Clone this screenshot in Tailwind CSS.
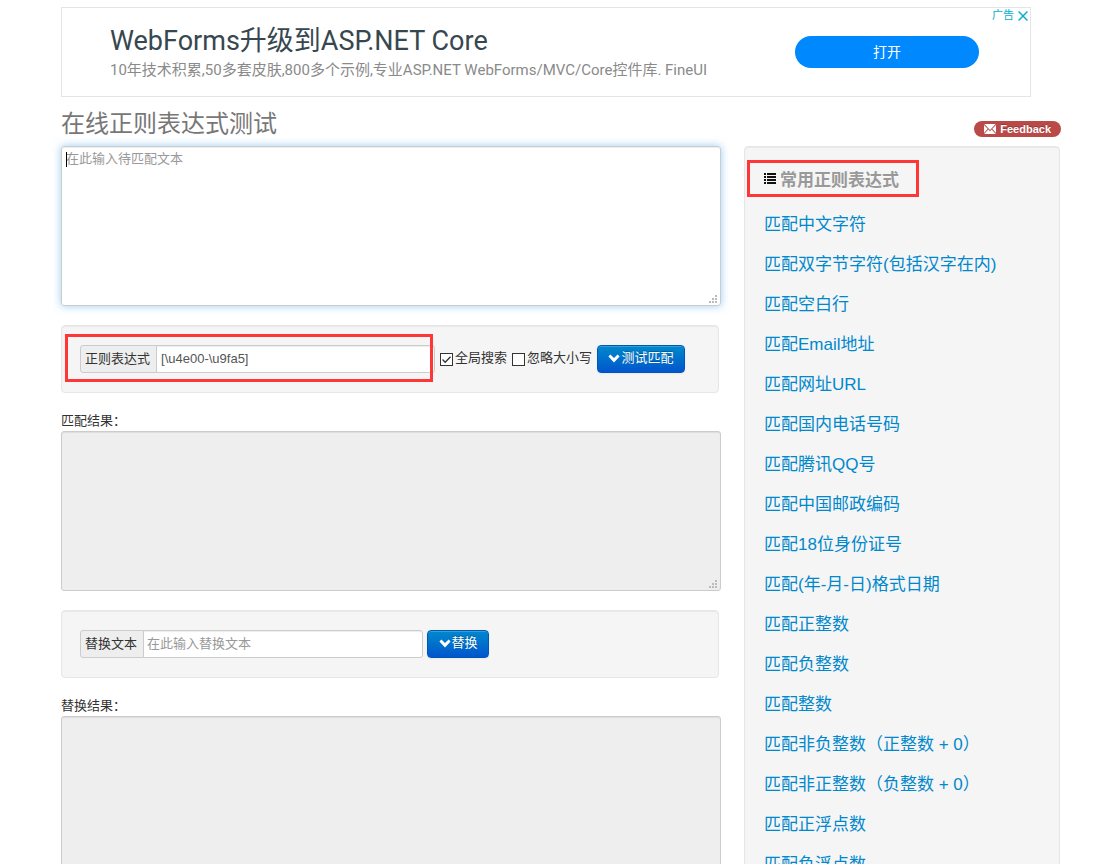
<!DOCTYPE html>
<html lang="zh-CN">
<head>
<meta charset="utf-8">
<title>在线正则表达式测试</title>
<script src="https://cdn.jsdelivr.net/npm/@tailwindcss/browser@4"></script>
</head>
<body class="bg-white font-['Liberation_Sans','Noto_Sans_CJK_SC',sans-serif] text-[13px] leading-[18px] text-[#333]">
<svg class="hidden">
  <symbol id="grip" viewBox="0 0 8 8"><path fill="#bbb" d="M6 0h2v2H6zM3 3h2v2H3zM6 3h2v2H6zM0 6h2v2H0zM3 6h2v2H3zM6 6h2v2H6z"/></symbol>
  <symbol id="chevron" viewBox="0 0 12 9"><path fill="#fff" d="M2.4.6 6 4.1 9.6.6l2 2L6 8.4.4 2.6z"/></symbol>
</svg>
<div class="pt-[7px] pl-[61px] pr-[50px]">

  <aside class="relative mr-[30px] flex min-h-[90px] items-start border border-[#e5e5e5] pl-12 pr-[51px] font-['Roboto','Noto_Sans_CJK_SC',sans-serif]">
    <div class="grow pt-[17px]">
      <h2 class="text-[27px] leading-8 text-[#37474f]">WebForms升级到ASP.NET Core</h2>
      <p class="pt-[3px] text-[15px] leading-5 text-[#8a8a8a]">10年技术积累,50多套皮肤,800多个示例,专业ASP.NET WebForms/MVC/Core控件库. FineUI</p>
    </div>
    <button type="button" class="mt-7 h-8 w-[184px] shrink-0 rounded-full bg-[#0088ff] text-sm text-white">打开</button>
    <a href="#" class="absolute right-[2px] top-0 flex items-center gap-1 text-[11px] leading-4 text-[#00aecd]">广告
      <svg class="size-[10px]" viewBox="0 0 10 10" fill="none" stroke="#00aecd" stroke-width="1.4"><path d="M.6.6l8.8 8.8M9.4.6.6 9.4"/></svg>
    </a>
  </aside>

  <header class="flex h-[49px] items-start justify-between">
    <h1 class="pt-[9px] text-2xl leading-9 text-[#777]">在线正则表达式测试</h1>
    <a href="#" class="mt-6 flex h-4 items-center gap-1 rounded-full bg-[#b94a48] pl-[10px] pr-[10px] text-[11px] leading-[14px] font-bold text-white text-shadow-[0_-1px_0_rgb(0_0_0/0.25)]">
      <svg class="h-[10px] w-3" viewBox="0 0 12 10"><path fill="#fff" d="M.4 0h11.2L6 6zM0 .9l3.7 3.9L0 9zM12 .9 8.3 4.800 12 9zM4.300 5.400 6 7.200l1.700-1.800L11.800 10H.2z"/></svg>Feedback</a>
  </header>

  <div class="flex gap-[23px]">
    <main class="min-w-0 grow">
      <div class="relative">
        <textarea aria-label="待匹配文本" placeholder="在此输入待匹配文本" class="block h-[160px] w-full resize-none rounded-[3px] border border-[#ccc] px-1 py-[3px] text-[#555] placeholder:text-[#999] shadow-[inset_0_1px_1px_rgb(0_0_0/0.075),0_0_8px_rgb(82_168_236/0.6)] outline-none"></textarea>
        <span class="absolute left-[5px] top-[6px] h-[15px] w-px bg-black"></span>
        <svg class="absolute bottom-[3px] right-1 size-2"><use href="#grip"/></svg>
      </div>

      <form class="relative mr-[2px] mt-[19px] flex items-center rounded border border-[#e6e6e6] bg-[#f5f5f5] px-[18px] py-[19px] shadow-[inset_0_1px_1px_rgb(0_0_0/0.05)]">
        <label for="pattern" class="h-7 rounded-l-[3px] border border-[#ccc] bg-[#eee] pl-1 pr-[6px] leading-[25px]">正则表达式</label>
        <input id="pattern" type="text" value="[\u4e00-\u9fa5]" class="-ml-px h-7 min-w-0 grow rounded-r-[3px] border border-[#ccc] bg-white px-1 pb-[2px] text-[#555] shadow-[inset_0_1px_1px_rgb(0_0_0/0.075)]">
        <label class="ml-[5px] flex shrink-0 items-center gap-[2px]">
          <input type="checkbox" checked class="size-[13px] appearance-none border border-[#333] bg-white checked:bg-[url('data:image/svg+xml,%3Csvg%20xmlns=%22http://www.w3.org/2000/svg%22%20viewBox=%220%200%2011%2011%22%3E%3Cpath%20d=%22M1.500%205.500l2.700%202.700%205.300-5.500%22%20fill=%22none%22%20stroke=%22%23333%22%20stroke-width=%221.300%22/%3E%3C/svg%3E')]"><span class="pb-[2px]">全局搜索</span></label>
        <label class="ml-[5px] flex shrink-0 items-center gap-[2px]">
          <input type="checkbox" class="size-[13px] appearance-none border border-[#333] bg-white"><span class="pb-[2px]">忽略大小写</span></label>
        <button type="button" class="ml-[5px] mr-[15px] flex h-7 w-[88px] shrink-0 items-center justify-center gap-px rounded border border-[#0055bb] bg-linear-to-b from-[#0088cc] to-[#0055cc] pb-[2px] text-white shadow-[inset_0_1px_0_rgb(255_255_255/0.2),0_1px_2px_rgb(0_0_0/0.05)] text-shadow-[0_-1px_0_rgb(0_0_0/0.25)]">
          <svg class="h-[9px] w-3"><use href="#chevron"/></svg>测试匹配</button>
        <span class="pointer-events-none absolute bottom-[10px] left-[3px] right-[285px] top-2 border-3 border-[#ff3636]"></span>
      </form>

      <label for="matches" class="mt-[19px] block">匹配结果：</label>
      <div class="relative">
        <textarea id="matches" readonly class="mt-px block h-[160px] w-full resize-none rounded-[3px] border border-[#ccc] bg-[#eee] px-1 shadow-[inset_0_1px_1px_rgb(0_0_0/0.075)]"></textarea>
        <svg class="absolute bottom-[3px] right-1 size-2"><use href="#grip"/></svg>
      </div>

      <form class="mr-[2px] mt-[19px] flex items-center rounded border border-[#e6e6e6] bg-[#f5f5f5] px-[18px] py-[19px] shadow-[inset_0_1px_1px_rgb(0_0_0/0.05)]">
        <label for="replacement" class="h-7 rounded-l-[3px] border border-[#ccc] bg-[#eee] pl-1 pr-[6px] leading-[25px]">替换文本</label>
        <input id="replacement" type="text" placeholder="在此输入替换文本" class="-ml-px h-7 w-[280px] min-w-0 rounded-r-[3px] border border-[#ccc] bg-white px-[3px] pb-[2px] text-[#555] placeholder:text-[#999] shadow-[inset_0_1px_1px_rgb(0_0_0/0.075)]">
        <button type="button" class="ml-1 flex h-7 w-[62px] shrink-0 items-center justify-center gap-px rounded border border-[#0055bb] bg-linear-to-b from-[#0088cc] to-[#0055cc] pb-[2px] text-white shadow-[inset_0_1px_0_rgb(255_255_255/0.2),0_1px_2px_rgb(0_0_0/0.05)] text-shadow-[0_-1px_0_rgb(0_0_0/0.25)]">
          <svg class="h-[9px] w-3"><use href="#chevron"/></svg>替换</button>
      </form>

      <label for="replaced" class="mt-[19px] block">替换结果：</label>
      <div class="relative">
        <textarea id="replaced" readonly class="mt-px block h-[160px] w-full resize-none rounded-[3px] border border-[#ccc] bg-[#eee] px-1 shadow-[inset_0_1px_1px_rgb(0_0_0/0.075)]"></textarea>
        <svg class="absolute bottom-[3px] right-1 size-2"><use href="#grip"/></svg>
      </div>
    </main>

    <nav class="relative mr-px w-[316px] shrink-0 rounded border border-[#e6e6e6] bg-[#f5f5f5] px-[19px] pt-[14px] pb-5 text-[17px] leading-10 shadow-[inset_0_1px_1px_rgb(0_0_0/0.05)]">
      <h2 class="flex items-center gap-1 font-bold text-[#999] text-shadow-[0_1px_0_rgb(255_255_255/0.5)]">
        <svg class="mb-[5px] h-[11px] w-3" viewBox="0 0 12 11"><path fill="#111" d="M0 0h2v2H0zM3 0h9v2H3zM0 3h2v2H0zM3 3h9v2H3zM0 6h2v2H0zM3 6h9v2H3zM0 9h2v2H0zM3 9h9v2H3z"/></svg>常用正则表达式</h2>
      <span class="pointer-events-none absolute left-[2px] top-[13px] h-[37px] w-[172px] border-3 border-[#ff3636]"></span>
      <ul class="mt-1 text-[#0088cc]">
        <li><a href="#">匹配中文字符</a></li>
        <li><a href="#">匹配双字节字符(包括汉字在内)</a></li>
        <li><a href="#">匹配空白行</a></li>
        <li><a href="#">匹配Email地址</a></li>
        <li><a href="#">匹配网址URL</a></li>
        <li><a href="#">匹配国内电话号码</a></li>
        <li><a href="#">匹配腾讯QQ号</a></li>
        <li><a href="#">匹配中国邮政编码</a></li>
        <li><a href="#">匹配18位身份证号</a></li>
        <li><a href="#">匹配(年-月-日)格式日期</a></li>
        <li><a href="#">匹配正整数</a></li>
        <li><a href="#">匹配负整数</a></li>
        <li><a href="#">匹配整数</a></li>
        <li><a href="#">匹配非负整数（正整数 + 0）</a></li>
        <li><a href="#">匹配非正整数（负整数 + 0）</a></li>
        <li><a href="#">匹配正浮点数</a></li>
        <li><a href="#">匹配负浮点数</a></li>
      </ul>
    </nav>
  </div>
</div>
</body>
</html>
